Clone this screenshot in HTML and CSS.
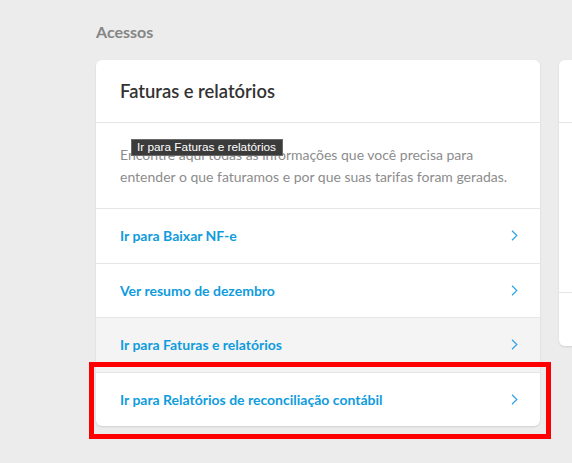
FILE: index.html
```html
<!DOCTYPE html>
<html lang="pt-BR">
<head>
<meta charset="utf-8">
<title>Acessos</title>
<link rel="stylesheet" href="styles.css">
</head>
<body>
<main class="page">
  <h2 class="section-title">Acessos</h2>
  <div class="cards">
    <section class="card">
      <header class="card-header">
        <h3 class="card-title">Faturas e relatórios</h3>
      </header>
      <p class="card-desc">Encontre aqui todas as informações que você precisa para entender o que faturamos e por que suas tarifas foram geradas.</p>
      <a class="row" href="#">
        <span>Ir para Baixar NF-e</span>
        <svg class="chev" width="7" height="11" viewBox="0 0 7 11"><path d="M1 0.8 L5.8 5.5 L1 10.2" fill="none" stroke="#2ba3e6" stroke-width="1.2"/></svg>
      </a>
      <a class="row" href="#">
        <span>Ver resumo de dezembro</span>
        <svg class="chev" width="7" height="11" viewBox="0 0 7 11"><path d="M1 0.8 L5.8 5.5 L1 10.2" fill="none" stroke="#2ba3e6" stroke-width="1.2"/></svg>
      </a>
      <a class="row row-hover" href="#">
        <span>Ir para Faturas e relatórios</span>
        <svg class="chev" width="7" height="11" viewBox="0 0 7 11"><path d="M1 0.8 L5.8 5.5 L1 10.2" fill="none" stroke="#2ba3e6" stroke-width="1.2"/></svg>
      </a>
      <a class="row" href="#">
        <span>Ir para Relatórios de reconciliação contábil</span>
        <svg class="chev" width="7" height="11" viewBox="0 0 7 11"><path d="M1 0.8 L5.8 5.5 L1 10.2" fill="none" stroke="#2ba3e6" stroke-width="1.2"/></svg>
      </a>
    </section>
    <section class="card card-side">
      <div class="side-head"></div>
      <div class="side-body"></div>
      <div class="side-foot"></div>
    </section>
  </div>
</main>
<div class="tooltip">Ir para Faturas e relatórios</div>
<div class="highlight"></div>
</body>
</html>
```
FILE: styles.css
```css
html, body {
  margin: 0;
  padding: 0;
}
body {
  background: #ececec;
  font-family: "Lato", "Open Sans", sans-serif;
  width: 572px;
  height: 463px;
  overflow: hidden;
  position: relative;
}
.page {
  padding: 22px 0 0 96px;
}
.section-title {
  margin: 0 0 18px 0;
  font-size: 16px;
  font-weight: 700;
  color: #858585;
  line-height: 20px;
}
.cards {
  display: flex;
  gap: 19px;
  align-items: flex-start;
}
.card {
  background: #fff;
  border-radius: 6px;
  box-shadow: 0 1px 2px rgba(0,0,0,0.12);
  overflow: hidden;
  flex: 0 0 444px;
}
.card-header {
  height: 62px;
  display: flex;
  align-items: center;
  padding: 0 24px;
  border-bottom: 1px solid #e6e6e6;
}
.card-title {
  margin: 0;
  font-size: 18.4px;
  font-weight: 600;
  color: #333;
}
.card-desc {
  margin: 0;
  padding: 21px 24px 20px;
  font-size: 14px;
  line-height: 22px;
  color: #8c8c8c;
}
.row {
  display: flex;
  align-items: center;
  justify-content: space-between;
  height: 53.5px;
  padding: 0 22px 0 24px;
  border-top: 1px solid #e6e6e6;
  color: #0f9cdd;
  font-weight: 700;
  font-size: 14px;
  text-decoration: none;
}
.row-hover {
  background: #f4f4f4;
}
.chev {
  display: block;
}
.card-side {
  flex: 0 0 100px;
  height: 286px;
  display: flex;
  flex-direction: column;
}
.side-head {
  height: 62px;
  border-bottom: 1px solid #e6e6e6;
}
.side-body {
  height: 169px;
  border-bottom: 1px solid #e6e6e6;
}
.side-foot {
  flex: 1;
}
.tooltip {
  position: absolute;
  left: 131px;
  top: 139px;
  height: 17px;
  padding: 0 5px;
  box-sizing: border-box;
  width: 152px;
  background: #3b3b3b;
  border: 1px solid #6a6a6a;
  color: #fff;
  font-family: "Liberation Sans", sans-serif;
  font-size: 11.8px;
  line-height: 15px;
  white-space: nowrap;
}
.highlight {
  position: absolute;
  left: 89px;
  top: 362px;
  width: 462px;
  height: 77px;
  box-sizing: border-box;
  border: 5px solid #ff0000;
}
```
